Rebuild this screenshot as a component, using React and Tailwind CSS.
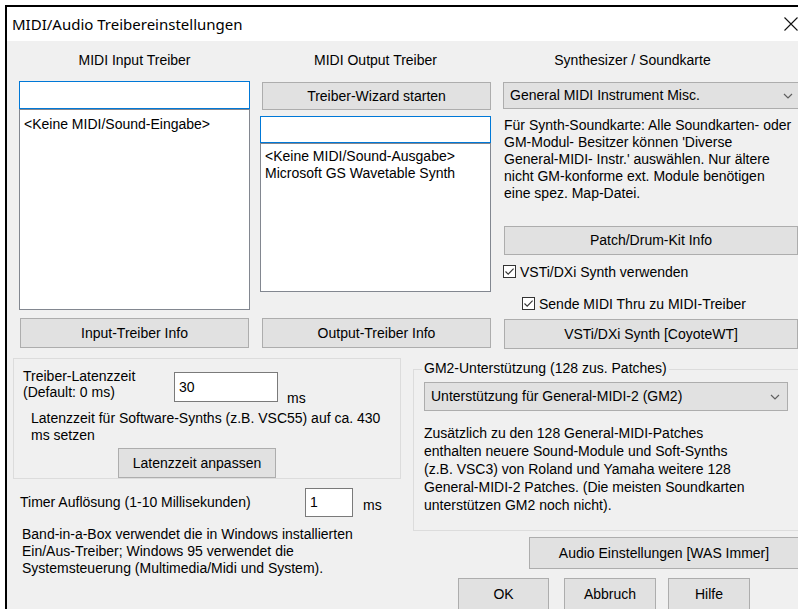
const ui = { fontFamily: '"Liberation Sans", Arial, sans-serif' }

function Button({ className = '', children }) {
  return (
    <div
      className={`flex items-center justify-center whitespace-nowrap border border-[#adadad] bg-[#e1e1e1] text-[14px] text-black ${className}`}
    >
      {children}
    </div>
  )
}

function Chevron() {
  return (
    <svg width="10" height="6" viewBox="0 0 10 6" className="shrink-0">
      <path d="M1 1 L5 5 L9 1" fill="none" stroke="#606060" strokeWidth="1.2" />
    </svg>
  )
}

function Select({ className = '', children }) {
  return (
    <div
      className={`flex items-center justify-between border border-[#adadad] bg-[#e1e1e1] pl-[6px] text-[14px] ${className}`}
    >
      <span className="whitespace-nowrap">{children}</span>
      <Chevron />
    </div>
  )
}

function Checkbox({ label, className = '' }) {
  return (
    <div className={`flex h-[13px] items-center gap-[4px] ${className}`}>
      <div className="flex h-[13px] w-[13px] shrink-0 items-center justify-center border border-[#333] bg-white">
        <svg width="11" height="11" viewBox="0 0 11 11">
          <path d="M1.5 5.5 L4.2 8.2 L9.6 2.6" fill="none" stroke="#333" strokeWidth="1.1" />
        </svg>
      </div>
      <span className="whitespace-nowrap text-[14px] leading-[16px]">{label}</span>
    </div>
  )
}

function TextBox({ value = '', focused = false, className = '' }) {
  return (
    <div
      className={`flex items-center bg-white px-[4px] text-[14px] ${
        focused ? 'border border-[#0078d7]' : 'border border-[#7a7a7a]'
      } ${className}`}
    >
      {value}
    </div>
  )
}

function ListBox({ items, className = '' }) {
  return (
    <div className={`border border-[#828790] bg-white px-[4px] text-[14px] leading-[17px] ${className}`}>
      {items.map((item) => (
        <div key={item} className="whitespace-nowrap">
          {item}
        </div>
      ))}
    </div>
  )
}

export default function App() {
  return (
    <div className="h-[609px] w-[798px] overflow-hidden bg-white pl-[5px] pt-[5px] text-black" style={ui}>
      <div className="flex h-[604px] w-[830px] flex-col border-l-2 border-t-2 border-black">
        {/* title bar */}
        <div className="flex h-[34px] shrink-0 items-center justify-between bg-white pl-[5px] pr-[37px]">
          <span className="text-[15px]" style={{ fontFamily: '"Noto Sans", sans-serif' }}>
            MIDI/Audio Treibereinstellungen
          </span>
          <svg width="14" height="14" viewBox="0 0 14 14">
            <path d="M0.5 0.5 L13.5 13.5 M13.5 0.5 L0.5 13.5" stroke="#111" strokeWidth="1.1" />
          </svg>
        </div>

        <div className="flex-1 bg-[#f0f0f0]">
          {/* driver columns */}
          <div className="flex pl-[12px] pt-[11px]">
            <div className="flex w-[231px] flex-col">
              <div className="h-[17px] text-center text-[14px] leading-[17px]">MIDI Input Treiber</div>
              <TextBox focused className="mt-[12px] h-[28px]" />
              <ListBox className="h-[201px] pt-[6px]" items={['<Keine MIDI/Sound-Eingabe>']} />
              <Button className="mx-[1px] mt-[8px] h-[30px]">Input-Treiber Info</Button>
            </div>

            <div className="ml-[10px] flex w-[231px] flex-col">
              <div className="h-[17px] text-center text-[14px] leading-[17px]">MIDI Output Treiber</div>
              <Button className="ml-[2px] mt-[13px] h-[28px]">Treiber-Wizard starten</Button>
              <TextBox focused className="mt-[6px] h-[27px]" />
              <ListBox
                className="h-[149px] pt-[4px]"
                items={['<Keine MIDI/Sound-Ausgabe>', 'Microsoft GS Wavetable Synth']}
              />
              <Button className="ml-[2px] mt-[26px] h-[30px]">Output-Treiber Info</Button>
            </div>

            <div className="ml-[12px] flex w-[310px] flex-col">
              <div className="h-[17px] pr-[51px] text-center text-[14px] leading-[17px]">Synthesizer / Soundkarte</div>
              <Select className="mt-[13px] h-[27px] w-[305px] pr-[14px]">General MIDI Instrument Misc.</Select>
              <p className="mt-[8px] whitespace-nowrap pl-[1px] text-[14px] leading-[17px]">
                Für Synth-Soundkarte: Alle Soundkarten- oder
                <br />
                GM-Modul- Besitzer können 'Diverse
                <br />
                General-MIDI- Instr.' auswählen. Nur ältere
                <br />
                nicht GM-konforme ext. Module benötigen
                <br />
                eine spez. Map-Datei.
              </p>
              <Button className="ml-[1px] mr-[15px] mt-[24px] h-[29px]">Patch/Drum-Kit Info</Button>
              <Checkbox className="mt-[10px]" label="VSTi/DXi Synth verwenden" />
              <Checkbox className="ml-[19px] mt-[19px]" label="Sende MIDI Thru zu MIDI-Treiber" />
              <Button className="ml-[1px] mr-[15px] mt-[9px] h-[30px]">VSTi/DXi Synth [CoyoteWT]</Button>
            </div>
          </div>

          {/* latency / GM2 */}
          <div className="mt-[9px] flex pl-[6px]">
            <div className="flex w-[388px] flex-col">
              <div className="flex h-[121px] flex-col border border-[#dcdcdc]">
                <div className="flex pl-[9px] pt-[9px]">
                  <div className="w-[151px] text-[14px] leading-[16px]">
                    Treiber-Latenzzeit
                    <br />
                    (Default: 0 ms)
                  </div>
                  <TextBox value="30" className="mt-[4px] h-[30px] w-[104px]" />
                  <span className="ml-[9px] mt-[23px] text-[14px] leading-[14px]">ms</span>
                </div>
                <p className="ml-[17px] mt-[5px] whitespace-nowrap text-[14px] leading-[17px]">
                  Latenzzeit für Software-Synths (z.B. VSC55) auf ca. 430
                  <br />
                  ms setzen
                </p>
                <Button className="ml-[104px] mt-[4px] h-[30px] w-[158px]">Latenzzeit anpassen</Button>
              </div>

              <div className="mt-[9px] flex items-center pl-[7px]">
                <span className="w-[285px] text-[14px]">Timer Auflösung (1-10 Millisekunden)</span>
                <TextBox value="1" className="h-[29px] w-[48px]" />
                <span className="ml-[10px] mt-[5px] text-[14px]">ms</span>
              </div>

              <p className="ml-[9px] mt-[9px] whitespace-nowrap text-[14px] leading-[17px]">
                Band-in-a-Box verwendet die in Windows installierten
                <br />
                Ein/Aus-Treiber; Windows 95 verwendet die
                <br />
                Systemsteuerung (Multimedia/Midi und System).
              </p>
            </div>

            <div className="ml-[12px] flex w-[410px] flex-col pt-[11px]">
              <div className="relative h-[162px] border border-[#dcdcdc] pl-[10px] pt-[12px]">
                <span className="absolute left-[8px] top-[-10px] bg-[#f0f0f0] px-[2px] text-[14px] leading-[17px]">
                  GM2-Unterstützung (128 zus. Patches)
                </span>
                <Select className="h-[29px] w-[364px] pr-[7px]">Unterstützung für General-MIDI-2 (GM2)</Select>
                <p className="mt-[13px] whitespace-nowrap text-[14px] leading-[18px]">
                  Zusätzlich zu den 128 General-MIDI-Patches
                  <br />
                  enthalten neuere Sound-Module und Soft-Synths
                  <br />
                  (z.B. VSC3) von Roland und Yamaha weitere 128
                  <br />
                  General-MIDI-2 Patches. (Die meisten Soundkarten
                  <br />
                  unterstützen GM2 noch nicht).
                </p>
              </div>

              <Button className="ml-[116px] mt-[6px] h-[32px] w-[270px]">Audio Einstellungen [WAS Immer]</Button>

              <div className="ml-[45px] mt-[9px] flex">
                <Button className="h-[32px] w-[91px] border-[#0078d7]">OK</Button>
                <Button className="ml-[15px] h-[32px] w-[92px]">Abbruch</Button>
                <Button className="ml-[12px] h-[32px] w-[82px]">Hilfe</Button>
              </div>
            </div>
          </div>
        </div>
      </div>
    </div>
  )
}
